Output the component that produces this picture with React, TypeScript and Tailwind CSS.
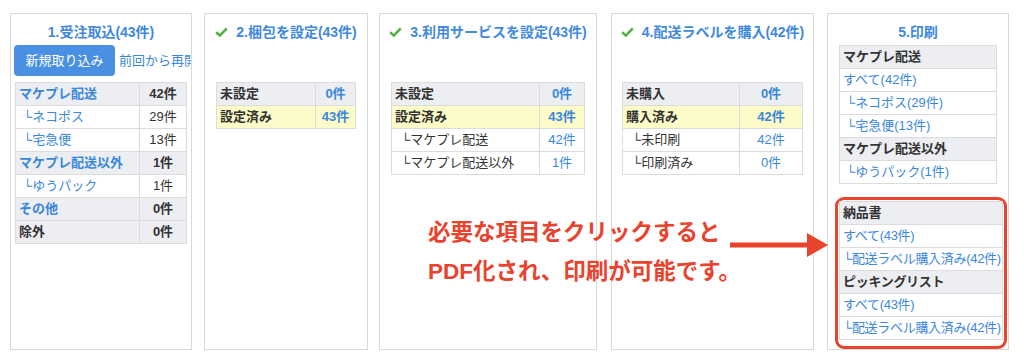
import React from 'react';

type Row = {
  label: string;
  value?: string;
  kind: 'head' | 'yellow' | 'sub' | 'plain';
  labelColor?: 'blue' | 'dark';
  valueColor?: 'blue' | 'dark';
  bold?: boolean;
};

const font = { fontFamily: '"Liberation Sans", "DejaVu Sans", "Noto Sans CJK JP", sans-serif' };

const bgFor = (kind: Row['kind']) =>
  kind === 'head' ? 'bg-[#eceef2]' : kind === 'yellow' ? 'bg-[#fdfcc8]' : 'bg-white';

const colorFor = (c?: 'blue' | 'dark') => (c === 'blue' ? 'text-[#3a87dc]' : 'text-[#333]');

const DataTable = ({
  rows,
  labelW,
  valueW,
  indent,
}: {
  rows: Row[];
  labelW: string;
  valueW?: string;
  indent: string;
}) => (
  <div className="border-x border-t border-[#dcdcdc] text-[13px]">
    {rows.map((r, i) => (
      <div key={i} className={`flex h-[23px] border-b border-[#dcdcdc] ${bgFor(r.kind)}`}>
        <div
          className={`flex items-center whitespace-nowrap ${labelW} ${r.kind === 'sub' ? indent : 'pl-[3px]'} ${colorFor(
            r.labelColor,
          )} ${r.bold ? 'font-bold' : ''}`}
        >
          {r.kind === 'sub' ? '└' + r.label : r.label}
        </div>
        {r.value !== undefined && (
          <div
            className={`flex items-center justify-center border-l border-[#dcdcdc] ${valueW} ${colorFor(
              r.valueColor,
            )} ${r.bold ? 'font-bold' : ''}`}
          >
            {r.value}
          </div>
        )}
      </div>
    ))}
  </div>
);

const Check = () => (
  <svg width="13" height="10" viewBox="0 0 13 10" className="shrink-0">
    <path d="M1.2 5.2 L4.8 8.6 L11.8 1.4" fill="none" stroke="#52b044" strokeWidth="2.6" strokeLinejoin="round" />
  </svg>
);

const Title = ({ text, done }: { text: string; done?: boolean }) => (
  <div className="flex h-[18px] items-center justify-center gap-[8px] whitespace-nowrap text-[14px] font-bold leading-[18px] text-[#4189dd]">
    {done && <Check />}
    <span>{text}</span>
  </div>
);

const Panel = ({ w, children }: { w: string; children: React.ReactNode }) => (
  <div className={`flex h-[337px] shrink-0 flex-col overflow-hidden border border-[#d9d9d9] bg-white pt-[9px] ${w}`}>
    {children}
  </div>
);

const App = () => {
  return (
    <div className="relative h-[362px] w-[1024px] overflow-hidden bg-white" style={font}>
      <div className="flex pl-[10px] pt-[13px]">
        <Panel w="w-[182px]">
          <Title text="1.受注取込(43件)" />
          <div className="mt-[4px] flex items-center whitespace-nowrap pl-[3px]">
            <div className="flex h-[31px] w-[101px] shrink-0 items-center justify-center rounded-[4px] bg-[#4a90e2] text-[13px] text-white">
              新規取り込み
            </div>
            <span className="ml-[4px] text-[13px] text-[#3a87dc]">前回から再開</span>
          </div>
          <div className="mx-[4px] mt-[6px]">
            <DataTable
              labelW="w-[123px]"
              valueW="flex-1"
              indent="pl-[7px]"
              rows={[
                { label: 'マケプレ配送', value: '42件', kind: 'head', labelColor: 'blue', bold: true },
                { label: 'ネコポス', value: '29件', kind: 'sub', labelColor: 'blue' },
                { label: '宅急便', value: '13件', kind: 'sub', labelColor: 'blue' },
                { label: 'マケプレ配送以外', value: '1件', kind: 'head', labelColor: 'blue', bold: true },
                { label: 'ゆうパック', value: '1件', kind: 'sub', labelColor: 'blue' },
                { label: 'その他', value: '0件', kind: 'head', labelColor: 'blue', bold: true },
                { label: '除外', value: '0件', kind: 'head', bold: true },
              ]}
            />
          </div>
        </Panel>

        <div className="ml-[12px]">
          <Panel w="w-[164px]">
            <Title text="2.梱包を設定(43件)" done />
            <div className="mx-[11px] mt-[41px]">
              <DataTable
                labelW="w-[98px]"
                valueW="flex-1"
                indent="pl-[9px]"
                rows={[
                  { label: '未設定', value: '0件', kind: 'head', valueColor: 'blue', bold: true },
                  { label: '設定済み', value: '43件', kind: 'yellow', valueColor: 'blue', bold: true },
                ]}
              />
            </div>
          </Panel>
        </div>

        <div className="ml-[11px]">
          <Panel w="w-[218px]">
            <Title text="3.利用サービスを設定(43件)" done />
            <div className="mx-[11px] mt-[41px]">
              <DataTable
                labelW="w-[147px]"
                valueW="flex-1"
                indent="pl-[9px]"
                rows={[
                  { label: '未設定', value: '0件', kind: 'head', valueColor: 'blue', bold: true },
                  { label: '設定済み', value: '43件', kind: 'yellow', valueColor: 'blue', bold: true },
                  { label: 'マケプレ配送', value: '42件', kind: 'sub', valueColor: 'blue' },
                  { label: 'マケプレ配送以外', value: '1件', kind: 'sub', valueColor: 'blue' },
                ]}
              />
            </div>
          </Panel>
        </div>

        <div className="ml-[14px]">
          <Panel w="w-[203px]">
            <Title text="4.配送ラベルを購入(42件)" done />
            <div className="mx-[10px] mt-[41px]">
              <DataTable
                labelW="w-[116px]"
                valueW="flex-1"
                indent="pl-[9px]"
                rows={[
                  { label: '未購入', value: '0件', kind: 'head', valueColor: 'blue', bold: true },
                  { label: '購入済み', value: '42件', kind: 'yellow', valueColor: 'blue', bold: true },
                  { label: '未印刷', value: '42件', kind: 'sub', valueColor: 'blue' },
                  { label: '印刷済み', value: '0件', kind: 'sub', valueColor: 'blue' },
                ]}
              />
            </div>
          </Panel>
        </div>

        <div className="ml-[13px]">
          <Panel w="w-[182px]">
            <Title text="5.印刷" />
            <div className="mx-[11px] mt-[4px]">
              <DataTable
                labelW="flex-1"
                indent="pl-[6px]"
                rows={[
                  { label: 'マケプレ配送', kind: 'head', bold: true },
                  { label: 'すべて(42件)', kind: 'plain', labelColor: 'blue' },
                  { label: 'ネコポス(29件)', kind: 'sub', labelColor: 'blue' },
                  { label: '宅急便(13件)', kind: 'sub', labelColor: 'blue' },
                  { label: 'マケプレ配送以外', kind: 'head', bold: true },
                  { label: 'ゆうパック(1件)', kind: 'sub', labelColor: 'blue' },
                ]}
              />
            </div>
            <div className="ml-[7px] mt-[13px] h-[152px] w-[172px] shrink-0 rounded-[9px] border-[3px] border-[#e8432d] p-px tracking-[-0.3px]">
              <DataTable
                labelW="flex-1"
                indent="pl-[3px]"
                rows={[
                  { label: '納品書', kind: 'head', bold: true },
                  { label: 'すべて(43件)', kind: 'plain', labelColor: 'blue' },
                  { label: '配送ラベル購入済み(42件)', kind: 'sub', labelColor: 'blue' },
                  { label: 'ピッキングリスト', kind: 'head', bold: true },
                  { label: 'すべて(43件)', kind: 'plain', labelColor: 'blue' },
                  { label: '配送ラベル購入済み(42件)', kind: 'sub', labelColor: 'blue' },
                ]}
              />
            </div>
          </Panel>
        </div>
      </div>

      {/* annotation over the panels */}
      <div className="absolute left-[428px] top-[213px] text-[22.5px] font-bold leading-[39px] text-[#e8432d]">
        <div>必要な項目をクリックすると</div>
        <div>PDF化され、印刷が可能です。</div>
      </div>
      <svg className="absolute left-[730px] top-[233px]" width="100" height="26" viewBox="0 0 100 26">
        <rect x="0" y="9.5" width="80" height="5" fill="#e8432d" />
        <polygon points="77,0 98,12 77,24" fill="#e8432d" />
      </svg>
    </div>
  );
};

export default App;
